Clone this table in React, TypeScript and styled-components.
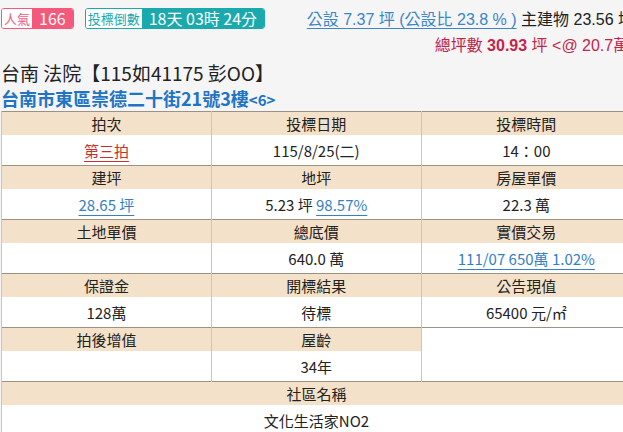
import React from "react";
import styled, { createGlobalStyle } from "styled-components";

const Global = createGlobalStyle`
  html, body { margin: 0; padding: 0; background: #f5f5f5; overflow: hidden; }
  body { font-family: "Noto Sans CJK TC", "Noto Sans", sans-serif; color: #222; }
`;

const Page = styled.div`
  width: 630px;
  padding: 0 0 0 1px;
  box-sizing: border-box;
`;

const TopBar = styled.div`
  display: flex;
  justify-content: space-between;
  align-items: flex-start;
  height: 60px;
`;

const Badges = styled.div`
  display: flex;
  gap: 11px;
  margin-top: 8px;
`;

const Badge = styled.div<{ $c: string }>`
  display: flex;
  height: 21px;
  border: 1px solid ${(p) => p.$c};
  border-radius: 3px;
  overflow: hidden;
  box-sizing: border-box;
`;

const BadgeLabel = styled.span<{ $c: string }>`
  background: #fff;
  color: ${(p) => p.$c};
  font-size: 13px;
  line-height: 19px;
  padding: 0 2px;
`;

const BadgeValue = styled.span<{ $c: string; $size: number }>`
  background: ${(p) => p.$c};
  color: #fff;
  font-size: ${(p) => p.$size}px;
  line-height: 19px;
  padding: 0 7px;
`;

const Info = styled.div`
  text-align: right;
  font-family: "Liberation Sans", "Noto Sans CJK TC", sans-serif;
  font-size: 16px;
  white-space: nowrap;
  margin-top: 7px;
  margin-right: -4px;
  display: flex;
  flex-direction: column;
  align-items: flex-end;
`;

const InfoLine = styled.div<{ $shift?: number }>`
  line-height: 26px;
  margin-right: ${(p) => -(p.$shift || 0)}px;
`;

const Link = styled.span<{ $c: string }>`
  color: ${(p) => p.$c};
  text-decoration: underline;
  text-underline-offset: 3px;
`;

const Total = styled.span`
  color: #c5244a;
`;

const Strong = styled.b`
  font-weight: 700;
`;

const Title = styled.div`
  font-size: 19px;
  line-height: 26px;
  height: 26px;
  color: #222;
`;

const Address = styled.div`
  font-size: 18px;
  line-height: 24px;
  height: 24px;
  font-weight: 700;
  color: #1f74c4;
  margin-bottom: 1px;
`;

const Small = styled.span`
  font-size: 15px;
  line-height: 0;
`;

const Table = styled.table`
  border-collapse: collapse;
  width: 630px;
  table-layout: fixed;
  background: #fff;
  border-left: 1px solid #8d8372;
`;

const HeadRow = styled.tr`
  border-top: 1px solid #9d9282;
`;

const Th = styled.th`
  background: #f4e1c9;
  font-weight: 400;
  font-size: 15px;
  height: 23px;
  padding: 0;
  line-height: 23px;
  border-left: 1px solid #cfc5b6;
  color: #222;
`;

const Td = styled.td`
  background: #fff;
  font-size: 15px;
  height: 30px;
  padding: 0;
  text-align: center;
  border-left: 1px solid #cfc5b6;
  color: #222;
`;

const CellLink = styled.span<{ $c: string }>`
  color: ${(p) => p.$c};
  text-decoration: underline;
  text-underline-offset: 4px;
`;

const blue = "#3580c4";

export default function App() {
  return (
    <>
      <Global />
      <Page>
        <TopBar>
          <Badges>
            <Badge $c="#f4587a">
              <BadgeLabel $c="#f4587a">人氣</BadgeLabel>
              <BadgeValue $c="#f4587a" $size={16}>166</BadgeValue>
            </Badge>
            <Badge $c="#1aa9ad">
              <BadgeLabel $c="#1aa9ad">投標倒數</BadgeLabel>
              <BadgeValue $c="#1aa9ad" $size={16}>18天 03時 24分</BadgeValue>
            </Badge>
          </Badges>
          <Info>
            <InfoLine>
              <Link $c="#3a86c8">公設 7.37 坪 (公設比 23.8 % )</Link> 主建物 23.56 坪
            </InfoLine>
            <InfoLine $shift={25}>
              <Total>
                總坪數 <Strong>30.93</Strong> 坪 &lt;@ 20.7萬/坪&gt;
              </Total>
            </InfoLine>
          </Info>
        </TopBar>
        <Title>台南 法院【115如41175 彭OO】</Title>
        <Address>
          台南市東區崇德二十街21號3樓<Small>&lt;6&gt;</Small>
        </Address>
        <Table>
          <tbody>
            <HeadRow>
              <Th>拍次</Th>
              <Th>投標日期</Th>
              <Th>投標時間</Th>
            </HeadRow>
            <tr>
              <Td>
                <CellLink $c="#c9302c">第三拍</CellLink>
              </Td>
              <Td>115/8/25(二)</Td>
              <Td>14：00</Td>
            </tr>
            <HeadRow>
              <Th>建坪</Th>
              <Th>地坪</Th>
              <Th>房屋單價</Th>
            </HeadRow>
            <tr>
              <Td>
                <CellLink $c={blue}>28.65 坪</CellLink>
              </Td>
              <Td>
                5.23 坪 <CellLink $c={blue}>98.57%</CellLink>
              </Td>
              <Td>22.3 萬</Td>
            </tr>
            <HeadRow>
              <Th>土地單價</Th>
              <Th>總底價</Th>
              <Th>實價交易</Th>
            </HeadRow>
            <tr>
              <Td></Td>
              <Td>640.0 萬</Td>
              <Td>
                <CellLink $c={blue}>111/07 650萬 1.02%</CellLink>
              </Td>
            </tr>
            <HeadRow>
              <Th>保證金</Th>
              <Th>開標結果</Th>
              <Th>公告現值</Th>
            </HeadRow>
            <tr>
              <Td>128萬</Td>
              <Td>待標</Td>
              <Td>65400 元/㎡</Td>
            </tr>
            <HeadRow>
              <Th>拍後增值</Th>
              <Th>屋齡</Th>
              <Td rowSpan={2}></Td>
            </HeadRow>
            <tr>
              <Td></Td>
              <Td>34年</Td>
            </tr>
            <HeadRow>
              <Th colSpan={3}>社區名稱</Th>
            </HeadRow>
            <tr>
              <Td colSpan={3}>文化生活家NO2</Td>
            </tr>
          </tbody>
        </Table>
      </Page>
    </>
  );
}
